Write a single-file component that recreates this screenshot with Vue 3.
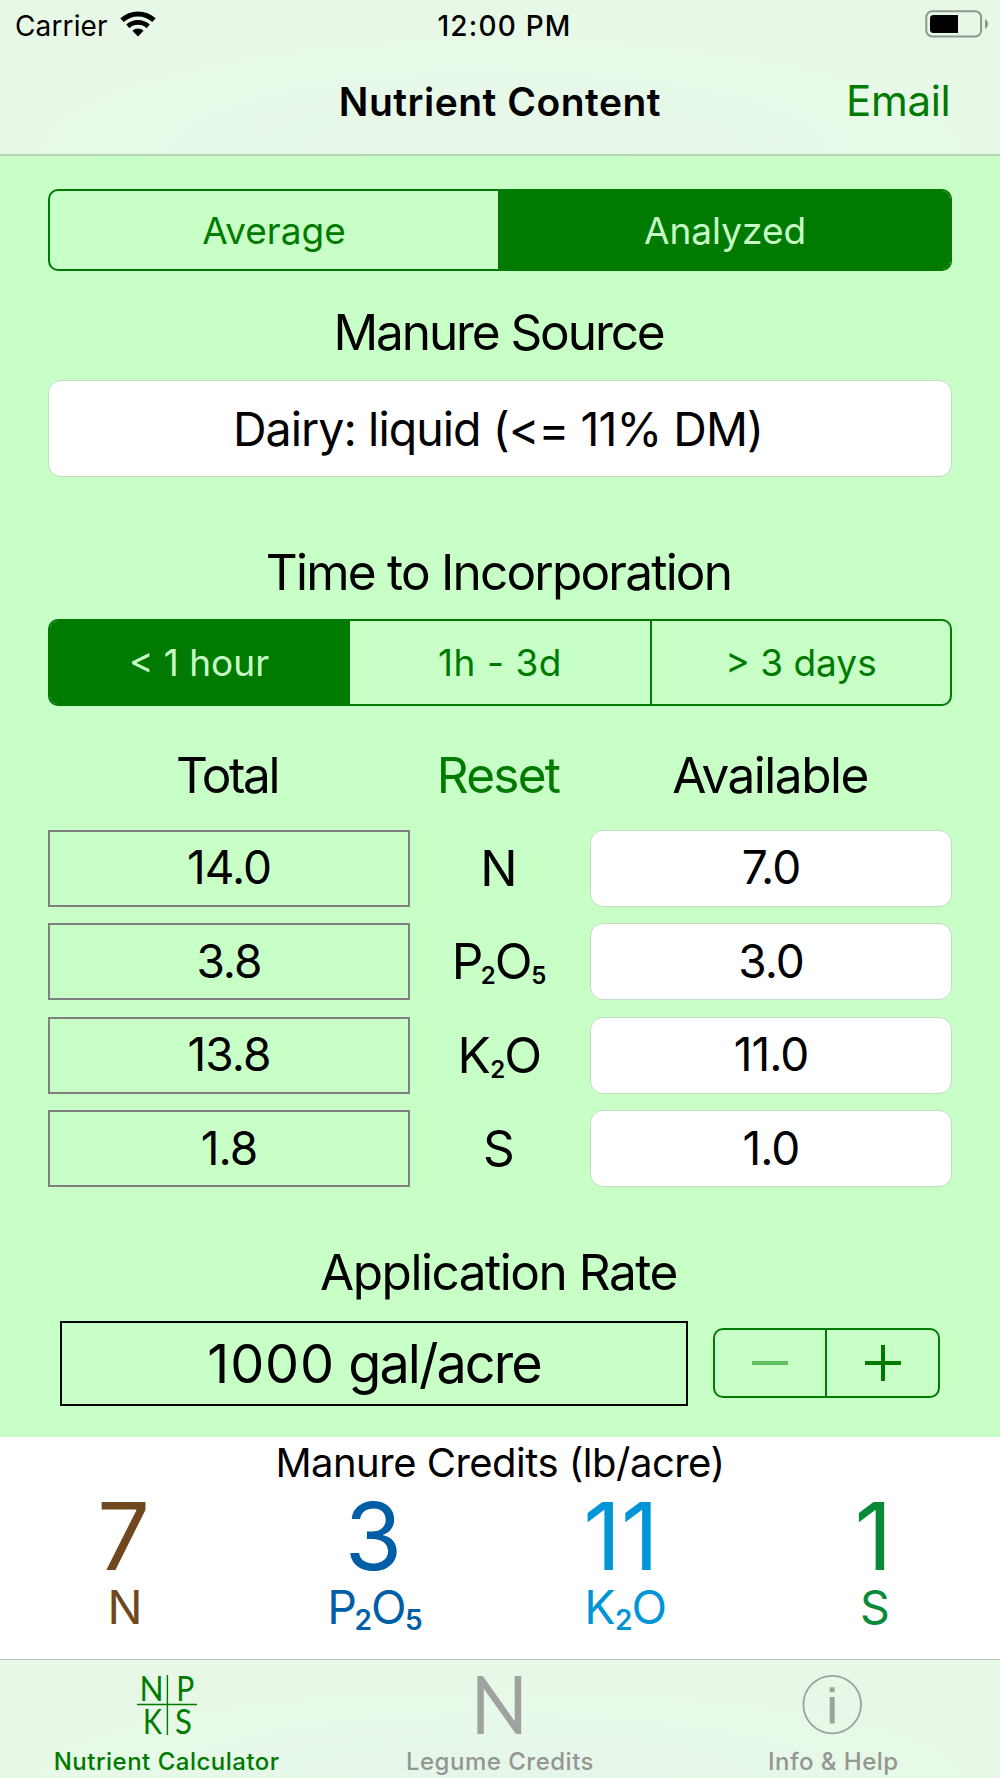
<script setup>
import { ref } from 'vue'

const source = ref('Dairy: liquid (<= 11% DM)')
const mode = ref('Analyzed')
const modes = ['Average', 'Analyzed']
const time = ref('< 1 hour')
const times = ['< 1 hour', '1h - 3d', '> 3 days']

const N = [{ t: 'N' }]
const P = [{ t: 'P' }, { t: '2', sub: true }, { t: 'O' }, { t: '5', sub: true }]
const K = [{ t: 'K' }, { t: '2', sub: true }, { t: 'O' }]
const S = [{ t: 'S' }]

const nutrients = [
  { id: 'n', formula: N, total: '14.0', available: '7.0', credit: 7 },
  { id: 'p', formula: P, total: '3.8', available: '3.0', credit: 3 },
  { id: 'k', formula: K, total: '13.8', available: '11.0', credit: 11 },
  { id: 's', formula: S, total: '1.8', available: '1.0', credit: 1 },
]
</script>

<template>
  <div class="screen">
    <header class="top">
      <div class="status">
        <div class="status-left">
          <span class="carrier">Carrier</span>
          <svg class="wifi" width="36" height="26" viewBox="0 0 36 26">
            <g fill="none" stroke="#000">
              <path d="M2 9.2 A23.5 23.5 0 0 1 34 9.2" stroke-width="5" />
              <path d="M7.8 15.4 A15.2 15.2 0 0 1 28.2 15.4" stroke-width="4.8" />
            </g>
            <path d="M18 25.4 L12.4 19.8 A7.8 7.8 0 0 1 23.6 19.8 Z" />
          </svg>
        </div>
        <span class="clock">12:00 PM</span>
        <div class="status-right">
          <svg width="64" height="28" viewBox="0 0 64 28">
            <rect x="1.3" y="1.3" width="54.8" height="25.2" rx="6" fill="none" stroke="#8e988e" stroke-width="2" />
            <path d="M8.5 5 H33 V23 H8.5 Q5 23 5 19.5 V8.5 Q5 5 8.5 5 Z" />
            <path d="M60 9 Q63 10.6 63 13.9 Q63 17.2 60 18.8 Z" fill="#8e988e" />
          </svg>
        </div>
      </div>
      <div class="nav">
        <h1>Nutrient Content</h1>
        <a class="email">Email</a>
      </div>
    </header>

    <main>
      <div class="segmented modes">
        <button v-for="m in modes" :key="m" :class="{ on: m === mode }"><span>{{ m }}</span></button>
      </div>

      <h2 class="source-title"><span>Manure Source</span></h2>
      <div class="field source"><span>{{ source }}</span></div>

      <h2 class="time-title"><span>Time to Incorporation</span></h2>
      <div class="segmented times">
        <button v-for="(t, i) in times" :key="t" :class="{ on: t === time }"><span :class="'time-' + i">{{ t }}</span></button>
      </div>

      <div class="heads">
        <span class="total-head">Total</span>
        <a class="reset">Reset</a>
        <span class="available-head">Available</span>
      </div>
      <div class="rows">
        <div v-for="n in nutrients" :key="n.id" class="row">
          <div class="total"><span>{{ n.total }}</span></div>
          <div class="formula">
            <span v-for="(part, i) in n.formula" :key="i" :class="[part.sub ? 'sub' : 'sym', 'c' + part.t]">{{ part.t }}</span>
          </div>
          <div class="field"><span>{{ n.available }}</span></div>
        </div>
      </div>

      <h2 class="rate-title"><span>Application Rate</span></h2>
      <div class="rate">
        <div class="rate-box"><span><span class="rate-value">1000</span> gal/acre</span></div>
        <div class="stepper">
          <button><i class="minus"></i></button>
          <button><i class="plus"></i></button>
        </div>
      </div>
    </main>

    <section class="credits">
      <h3><span>Manure Credits (lb/acre)</span></h3>
      <div class="credit-row">
        <div v-for="n in nutrients" :key="n.id" class="credit" :class="n.id">
          <div class="amount">{{ n.credit }}</div>
          <div class="formula">
            <span v-for="(part, i) in n.formula" :key="i" :class="[part.sub ? 'sub' : 'sym', 'c' + part.t]">{{ part.t }}</span>
          </div>
        </div>
      </div>
    </section>

    <nav class="tabs">
      <a class="tab active">
        <svg width="60" height="60" viewBox="0 0 60 60">
          <path d="M30.4 0 V60 M0 29.5 H60" stroke="currentColor" stroke-width="1.4" />
          <g class="thin" font-size="34" fill="currentColor" text-anchor="middle">
            <text transform="translate(14.6 25.6) scale(0.93 1)">N</text>
            <text transform="translate(48.2 25.6) scale(0.88 1)">P</text>
            <text transform="translate(15.4 59) scale(0.84 1)">K</text>
            <text transform="translate(46.4 58.6) scale(0.92 1)">S</text>
          </g>
        </svg>
        <span>Nutrient Calculator</span>
      </a>
      <a class="tab">
        <svg width="60" height="60" viewBox="0 0 60 60">
          <text class="thin" transform="translate(29.3 59.2) scale(0.92 1)" font-size="82" fill="currentColor" text-anchor="middle">N</text>
        </svg>
        <span>Legume Credits</span>
      </a>
      <a class="tab">
        <svg width="60" height="60" viewBox="0 0 60 60">
          <circle cx="29.2" cy="29.6" r="28.8" fill="none" stroke="currentColor" stroke-width="1.8" />
          <path d="M26.7 12.2 h5 v5 h-5 Z M26.7 22 h5 v26.5 h-5 Z" fill="currentColor" />
        </svg>
        <span>Info &amp; Help</span>
      </a>
    </nav>
  </div>
</template>

<style>
body {
  margin: 0;
}
</style>

<style scoped>
.screen {
  --green: #007a00;
  --mint: #c7ffc7;
  width: 1000px;
  height: 1778px;
  display: flex;
  flex-direction: column;
  background: var(--mint);
  color: #000;
  font-family: Inter, "Liberation Sans", sans-serif;
  overflow: hidden;
}
h1, h2, h3 {
  margin: 0;
  font-weight: 400;
}
span, a, h1 {
  white-space: nowrap;
}
button {
  font: inherit;
  color: inherit;
  background: none;
  border: 0;
  padding: 0;
  margin: 0;
}

/* header */
.top {
  box-sizing: border-box;
  height: 156px;
  flex: none;
  border-bottom: 2px solid #b4d6b6;
  background: radial-gradient(ellipse 50% 80% at 50% 100%, #e6f7ea, #e7f9e6 100%);
}
.status {
  display: grid;
  grid-template-columns: 1fr auto 1fr;
  align-items: center;
  height: 50px;
  padding-top: 1px;
  font-size: 28px;
  line-height: 50px;
}
.status-left {
  display: flex;
  align-items: center;
  padding-left: 15px;
}
.carrier {
  letter-spacing: 0.13px;
}
.wifi {
  margin: 0 0 4px 12px;
}
.clock {
  font-weight: 500;
  letter-spacing: 1.2px;
  margin-right: -1.2px;
  padding-left: 8px;
}
.status-right {
  display: flex;
  justify-content: flex-end;
  padding: 0 11px 4px 0;
}
.nav {
  display: grid;
  grid-template-columns: 1fr auto 1fr;
  align-items: baseline;
  line-height: 100px;
}
.nav h1 {
  grid-column: 2;
  font-size: 39px;
  font-weight: 600;
  letter-spacing: 0.5px;
}
.email {
  justify-self: end;
  padding-right: 49.5px;
  font-size: 42px;
  letter-spacing: -0.3px;
  color: var(--green);
}

/* calculator */
main {
  display: flex;
  flex-direction: column;
  height: 1281px;
  flex: none;
  padding: 33px 48px 0;
  box-sizing: border-box;
}
.segmented {
  display: grid;
  flex: none;
  box-sizing: border-box;
  border: 2px solid var(--green);
  border-radius: 10px;
  overflow: hidden;
  color: var(--green);
  font-size: 37px;
}
.segmented button {
  display: flex;
  align-items: center;
  justify-content: center;
}
.segmented button + button {
  border-left: 2px solid var(--green);
}
.segmented .on {
  background: var(--green);
  color: var(--mint);
}
.modes {
  height: 82px;
  grid-template-columns: 448px 1fr;
  letter-spacing: -0.4px;
}
.times {
  height: 87px;
  grid-template-columns: 298px 302px 1fr;
}
.time-1 {
  letter-spacing: 0.56px;
}
h2 {
  display: flex;
  justify-content: center;
  padding-right: 3px;
  font-size: 49.5px;
  line-height: 60px;
}
.source-title {
  margin: 31px 0 18px;
  letter-spacing: -2.08px;
}
.field {
  box-sizing: border-box;
  display: flex;
  align-items: center;
  justify-content: center;
  background: #fff;
  border: 1px solid #c4dcc4;
  border-radius: 13px;
  font-size: 46px;
}
.source {
  height: 97px;
  padding-right: 4px;
  font-size: 46.5px;
  letter-spacing: -0.95px;
}
.time-title {
  margin: 65px 0 17px;
  letter-spacing: -1.78px;
}
.heads,
.row {
  display: grid;
  grid-template-columns: 362px 1fr 362px;
}
.heads {
  margin: 38.5px 0 25px;
  justify-items: center;
  font-size: 49.5px;
  line-height: 60px;
}
.total-head {
  padding-right: 4px;
  letter-spacing: -2.37px;
}
.reset {
  padding-right: 4px;
  letter-spacing: -1.74px;
  color: var(--green);
}
.available-head {
  padding-right: 2px;
  letter-spacing: -1.5px;
}
.rows {
  display: flex;
  flex-direction: column;
  gap: 17px;
}
.row {
  height: 76.5px;
}
.row .field,
.total {
  letter-spacing: -1px;
  padding-bottom: 2px;
}
.total {
  box-sizing: border-box;
  display: flex;
  align-items: center;
  justify-content: center;
  border: 2px solid #808080;
  font-size: 46px;
}
.formula {
  display: flex;
  align-items: baseline;
  justify-content: center;
}
.row .formula {
  line-height: 77px;
  font-size: 49.5px;
  padding-right: 2px;
}
.row .sub {
  font-size: 24px;
  font-weight: 600;
  line-height: 1;
  position: relative;
  top: 5px;
}
.formula .cP {
  margin-right: -2.5px;
}
.formula .cK {
  margin-right: -0.5px;
}
.formula .cO {
  margin: 0 -1.5px 0 -1px;
}
.rate-title {
  margin: 55.5px 0 18.5px;
  letter-spacing: -1.46px;
}
.rate {
  display: flex;
  align-items: center;
  justify-content: space-between;
  padding: 0 12px;
}
.rate-box {
  box-sizing: border-box;
  width: 628px;
  height: 85px;
  display: flex;
  align-items: center;
  justify-content: center;
  border: 2px solid #000;
  font-size: 54px;
  letter-spacing: -1.95px;
}
.rate-value {
  letter-spacing: 0.9px;
}
.stepper {
  box-sizing: border-box;
  width: 227px;
  height: 70px;
  display: grid;
  grid-template-columns: 110px 1fr;
  border: 2px solid var(--green);
  border-radius: 10px;
  color: var(--green);
}
.stepper button {
  display: flex;
  align-items: center;
  justify-content: center;
}
.stepper button + button {
  border-left: 2px solid var(--green);
}
.minus {
  width: 36px;
  height: 4px;
  background: #63bd63;
}
.plus {
  width: 36px;
  height: 36px;
  background:
    linear-gradient(currentColor, currentColor) center / 36px 4px no-repeat,
    linear-gradient(currentColor, currentColor) center / 4px 36px no-repeat;
}

/* credits */
.credits {
  height: 222px;
  flex: none;
  background: #fff;
}
h3 {
  display: flex;
  justify-content: center;
  font-size: 40px;
  line-height: 52px;
  letter-spacing: -0.51px;
}
.credit-row {
  display: grid;
  grid-template-columns: repeat(4, 1fr);
}
.credit {
  display: flex;
  flex-direction: column;
  align-items: center;
}
.amount {
  margin: 1px 0 -1px;
  padding-right: 3px;
  font-size: 93px;
  line-height: 92px;
}
.k .amount {
  padding-right: 8px;
}
.credit .formula {
  font-size: 46.5px;
  line-height: 52px;
}
.credit .sub {
  font-size: 28px;
  font-weight: 600;
  line-height: 1;
  position: relative;
  top: 6px;
}
.n { color: #704820; }
.p { color: #005ea6; }
.k { color: #0095d6; }
.s { color: #088a38; }

/* tab bar */
.tabs {
  flex: 1;
  display: grid;
  grid-template-columns: repeat(3, 1fr);
  border-top: 1px solid #b9c0b9;
  background: radial-gradient(ellipse 50% 80% at 50% 100%, #e6f7ea, #e7f9e6 100%);
  color: #949694;
}
.tab {
  display: flex;
  flex-direction: column;
  align-items: center;
  padding-top: 15px;
  font-size: 24px;
  font-weight: 500;
  line-height: 30px;
  letter-spacing: 0.5px;
}
.tab svg {
  color: #a0a2a0;
  margin-bottom: 12px;
  overflow: visible;
}
.tab.active,
.tab.active svg {
  color: var(--green);
}
.thin {
  font-family: Lato, sans-serif;
  font-weight: 400;
  letter-spacing: 0;
}
</style>
